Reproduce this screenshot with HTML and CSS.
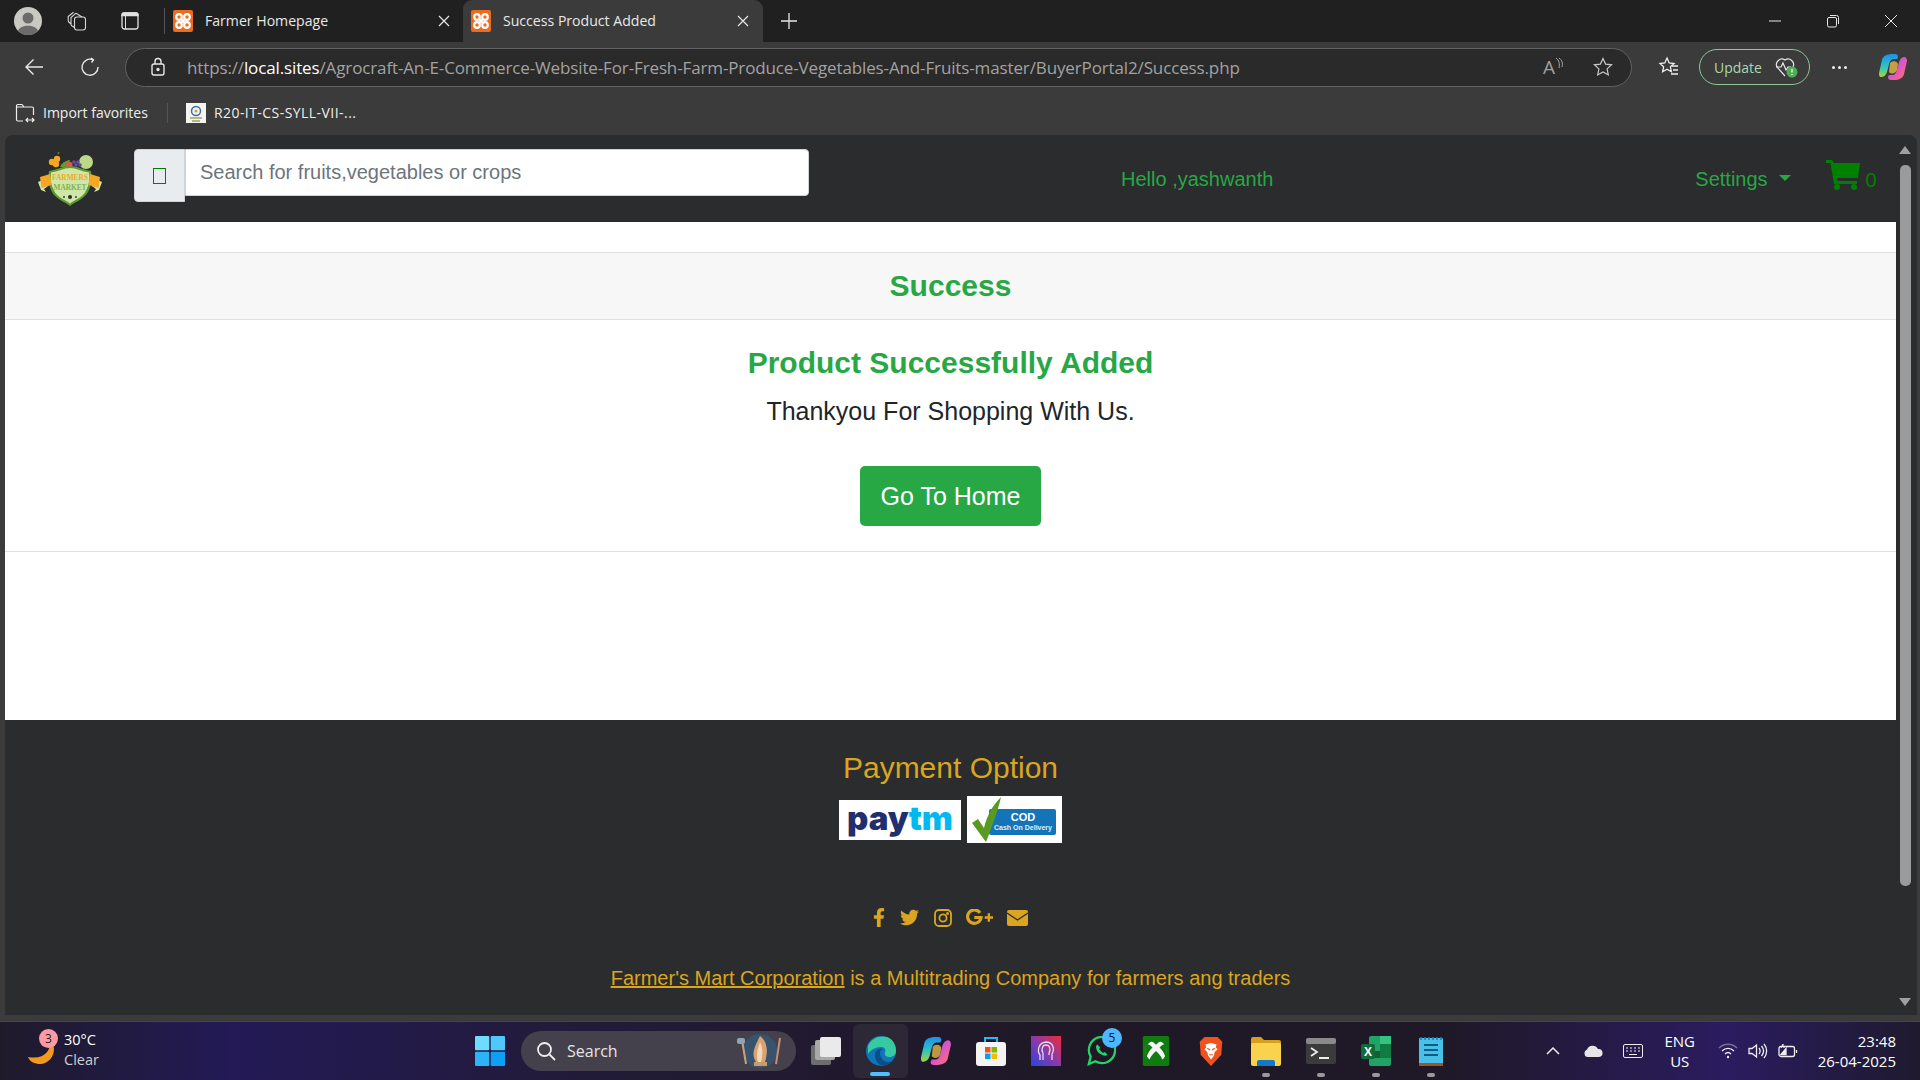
FILE: index.html
```html
<!DOCTYPE html>
<html lang="en">
<head>
<meta charset="utf-8">
<title>Success Product Added</title>
<link rel="stylesheet" href="styles.css">
</head>
<body>
<svg class="defs" width="0" height="0" aria-hidden="true">
  <defs>
    <symbol id="xampp" viewBox="0 0 20 22">
      <rect width="20" height="22" rx="2" fill="#ee6a1f"/>
      <g fill="none" stroke="#fff" stroke-width="2.200"><circle cx="6" cy="7" r="2.800"/><circle cx="14" cy="7" r="2.800"/><circle cx="6" cy="15" r="2.800"/><circle cx="14" cy="15" r="2.800"/><path d="M8 9l4 4M12 9l-4 4"/></g>
    </symbol>
    <symbol id="close" viewBox="0 0 12 12"><path d="M1 1l10 10M11 1L1 11" fill="none" stroke="#e6e6e6" stroke-width="1.200"/></symbol>
    <symbol id="copilot" viewBox="0 0 28 28">
      <defs>
        <linearGradient id="cpa" x1="0" y1="0" x2="0" y2="1"><stop offset="0" stop-color="#1f8fe8"/><stop offset=".55" stop-color="#2fc4c0"/><stop offset="1" stop-color="#a8d23a"/></linearGradient>
        <linearGradient id="cpb" x1="0" y1="0" x2="1" y2="1"><stop offset="0" stop-color="#8a5cf0"/><stop offset=".6" stop-color="#e858b8"/><stop offset="1" stop-color="#f8853c"/></linearGradient>
      </defs>
      <path d="M13 1h3c2 0 3 1 3 3l-1 2h-3c-3 0-4 2-5 5l-2 8c-1 3-3 5-6 5-2 0-2-2-2-4l3-13c1-4 5-6 10-6z" fill="url(#cpa)"/>
      <path d="M15 27h-3c-2 0-3-1-3-3l1-2h3c3 0 4-2 5-5l2-8c1-3 3-5 5-5 2 0 3 2 3 4l-3 13c-1 4-5 6-10 6z" fill="url(#cpb)"/>
      <path d="M11 10c3-3 7-2 8 1l-1 6c-1 3-5 5-8 2z" fill="#f3c34a" opacity=".75"/>
    </symbol>
  </defs>
</svg>

<header class="titlebar">
  <svg class="avatar" viewBox="0 0 28 28"><circle cx="14" cy="14" r="14" fill="#c9c8c3"/><circle cx="14" cy="11" r="5.500" fill="#6b6b6b"/><path d="M4 24c2-7 18-7 20 0a14 14 0 0 1-20 0z" fill="#6b6b6b"/></svg>
  <svg class="tb-collections" viewBox="0 0 20 20" fill="none" stroke="#d8d8d8" stroke-width="1.100"><rect x="7.500" y="6" width="11" height="13" rx="2.500"/><path d="M7.500 16.500l-2.700-1.800a2 2 0 0 1-.8-1.700V6.500L9 2.200M4 13L1.800 11a2 2 0 0 1-.6-1.500V5.500L6.500 1.200M9 2.200l6 3.800"/></svg>
  <svg class="tb-vtabs" viewBox="0 0 20 20" fill="none" stroke="#e0e0e0" stroke-width="1.300"><rect x="2" y="2" width="16" height="16" rx="2.500"/><path d="M5.500 2v16" stroke-width="1"/><path d="M2 4.500h16v-1a1.500 1.500 0 0 0-1.500-1.500h-13A1.500 1.500 0 0 0 2 3.500z" fill="#e0e0e0"/></svg>
  <span class="tb-sep"></span>
  <div class="tab">
    <svg class="favicon"><use href="#xampp"/></svg>
    <span class="tab-label">Farmer Homepage</span>
    <svg class="tab-x"><use href="#close"/></svg>
  </div>
  <div class="tab tab-active">
    <svg class="favicon"><use href="#xampp"/></svg>
    <span class="tab-label">Success Product Added</span>
    <svg class="tab-x"><use href="#close"/></svg>
  </div>
  <svg class="tab-plus" viewBox="0 0 18 18"><path d="M9 1v16M1 9h16" stroke="#e6e6e6" stroke-width="1.300"/></svg>
  <div class="win-controls">
    <span class="win-btn"><svg viewBox="0 0 14 14"><path d="M1 7h12" stroke="#e6e6e6"/></svg></span>
    <span class="win-btn"><svg viewBox="0 0 14 14" fill="none" stroke="#e6e6e6"><rect x="1.500" y="3.500" width="9" height="9.500" rx="1.500"/><path d="M4 1.500h6.500a2 2 0 0 1 2 2V10"/></svg></span>
    <span class="win-btn"><svg viewBox="0 0 14 14"><path d="M1 1l12 12M13 1L1 13" stroke="#e6e6e6"/></svg></span>
  </div>
</header>

<div class="toolbar">
  <svg class="nav-back" viewBox="0 0 20 20" fill="none" stroke="#e8e8e8" stroke-width="1.400"><path d="M19 10H2M9.500 2.500L2 10l7.500 7.500"/></svg>
  <svg class="nav-reload" viewBox="0 0 20 20" fill="none" stroke="#e8e8e8" stroke-width="1.400"><path d="M12.500 2.600A8 8 0 1 0 18 10M11 1l2.500 1.800L11.500 5.500"/></svg>
  <div class="addressbar">
    <svg class="lock" viewBox="0 0 16 20" fill="none" stroke="#e6e6e6" stroke-width="1.400"><rect x="2" y="7" width="12" height="11" rx="2"/><path d="M5 7V4.500a3 3 0 0 1 6 0V7"/><circle cx="8" cy="12.500" r="1" fill="#e6e6e6"/></svg>
    <span class="url"><span class="url-dim">https://</span><span class="url-host">local.sites</span><span class="url-dim">/Agrocraft-An-E-Commerce-Website-For-Fresh-Farm-Produce-Vegetables-And-Fruits-master/BuyerPortal2/Success.php</span></span>
    <span class="read-aloud">A<svg viewBox="0 0 8 14" fill="none" stroke="#a8a8a8"><path d="M1 1c3 2 4 6 3 10M4 1c3 2 4 5 3 9"/></svg></span>
    <svg class="star" viewBox="0 0 20 20" fill="none" stroke="#c8c8c8" stroke-width="1.200"><path d="M10 1.500l2.600 5.600 6 .7-4.500 4.100 1.200 6-5.300-3-5.300 3 1.200-6L1.400 7.800l6-.7z"/></svg>
  </div>
  <svg class="fav-list" viewBox="0 0 22 22" fill="none" stroke="#eee" stroke-width="1.300"><path d="M9 2l2.200 5 4.800.5-3.600 3.300 1 5-4.400-2.600-4.400 2.600 1-5L2 7.500 6.800 7z"/><path d="M14 11h6M15 15h5M13 19h7" transform="translate(0 -1)"/></svg>
  <div class="update-pill">
    <span>Update</span>
    <svg class="update-heart" viewBox="0 0 24 22" fill="none" stroke="#e8e8e8" stroke-width="1.200"><path d="M11 20L3 11a5.500 5.500 0 0 1 8-7 5.500 5.500 0 0 1 8 7"/><path d="M2 11h5l2-4 3 7 2-3h3"/><circle cx="18" cy="16" r="5.500" fill="#4caf50" stroke="none"/><path d="M18 13v3.500M18 18v1" stroke="#fff"/></svg>
  </div>
  <span class="dots"><i></i><i></i><i></i></span>
  <svg class="tool-copilot"><use href="#copilot"/></svg>
</div>

<div class="bookmarks">
  <svg class="bm-import" viewBox="0 0 20 20" fill="none" stroke="#eee" stroke-width="1.200"><path d="M8 18H3a1.500 1.500 0 0 1-1.500-1.500V3A1.500 1.500 0 0 1 3 1.500h4l2 2.500h8a1.500 1.500 0 0 1 1.500 1.500V12M1.500 4H9"/><path d="M11 17h8M13 15l-2 2 2 2M17 15l2 2-2 2"/></svg>
  <span class="bm-text">Import favorites</span>
  <span class="bm-sep"></span>
  <svg class="bm-fav" viewBox="0 0 20 20"><rect width="20" height="20" fill="#f4f4f2"/><circle cx="10" cy="8" r="4.500" fill="none" stroke="#3c6fa8" stroke-width="1.500"/><circle cx="10" cy="8" r="1.500" fill="#c9a23a"/><path d="M4 15h12M6 18h8" stroke="#9aa46a" stroke-width="1.500"/></svg>
  <span class="bm-text bm-text-wide">R20-IT-CS-SYLL-VII-...</span>
</div>

<div class="viewport">
  <div class="page">
    <nav class="navbar">
      <svg class="logo" viewBox="0 0 66 54">
        <circle cx="49" cy="10" r="7" fill="#bcd98a"/>
        <circle cx="20" cy="7" r="3.200" fill="#f5a623"/><circle cx="15" cy="10" r="3.200" fill="#f5a623"/><circle cx="19" cy="12" r="3.200" fill="#f5a623"/>
        <path d="M21 2l1-2" stroke="#5c8a2e" stroke-width="1.500"/>
        <path d="M23 15c2-5 7-7 10-7l-3 7z" fill="#5e9b32"/>
        <circle cx="32" cy="13" r="3.600" fill="#e2574c"/>
        <circle cx="37" cy="10" r="1.800" fill="#6c4aa0"/><circle cx="41" cy="10" r="1.800" fill="#6c4aa0"/><circle cx="39" cy="13" r="1.800" fill="#6c4aa0"/><circle cx="43" cy="13" r="1.800" fill="#6c4aa0"/>
        <path d="M1 30l9-4 1 8-4 3 2 3-5-2z" fill="#cfe6a8"/>
        <path d="M65 30l-9-4-1 8 4 3-2 3 5-2z" fill="#cfe6a8"/>
        <path d="M33 54c-5-4-14-7-18-14-3-6-4-12-3-21 7-1 14-5 21-5s14 4 21 5c1 9 0 15-3 21-4 7-13 10-18 14z" fill="#5e9b32"/>
        <path d="M33 51.500c-5-4-13-6-16-13-3-5-4-11-3-18 7-1 13-4.500 19-4.500s12 3.500 19 4.500c1 7 0 13-3 18-3 7-11 9-16 13z" fill="#cfe6a8"/>
        <path d="M3 25l10-3 1.500 11-10 3z" fill="#f5a623"/>
        <path d="M63 25l-10-3-1.500 11 10 3z" fill="#f5a623"/>
        <text class="logo-t1" x="33" y="28" text-anchor="middle" textLength="36" lengthAdjust="spacingAndGlyphs">FARMERS</text>
        <text class="logo-t2" x="33" y="38" text-anchor="middle" textLength="33" lengthAdjust="spacingAndGlyphs">MARKET</text>
        <circle cx="33" cy="45" r="2" fill="#2b2c2e"/><circle cx="27" cy="45" r=".9" fill="#2b2c2e"/><circle cx="39" cy="45" r=".9" fill="#2b2c2e"/>
      </svg>
      <div class="search-group">
        <span class="search-prepend"><span class="tofu"></span></span>
        <input class="search-input" type="text" placeholder="Search for fruits,vegetables or crops">
      </div>
      <span class="hello">Hello ,yashwanth</span>
      <span class="settings">Settings<span class="caret"></span></span>
      <svg class="cart" viewBox="0 0 36 30"><path d="M0 0h6l2 3h26l-2 15H11l.6 3H31v3H8L4.500 3H0z" fill="#008000"/><circle cx="11" cy="27" r="3" fill="#008000"/><circle cx="28" cy="27" r="3" fill="#008000"/></svg>
      <span class="cart-count">0</span>
    </nav>

    <main class="content">
      <section class="card">
        <h2 class="card-head">Success</h2>
        <div class="card-body">
          <h3 class="card-title">Product Successfully Added</h3>
          <p class="card-text">Thankyou For Shopping With Us.</p>
          <a class="btn-home" href="#">Go To Home</a>
        </div>
      </section>
    </main>

    <footer class="footer">
      <h3 class="pay-title">Payment Option</h3>
      <div class="pay-row">
        <span class="paytm"><span class="pay">pay</span><span class="tm">tm</span></span>
        <svg class="cod" viewBox="0 0 95 47">
          <rect width="95" height="47" fill="#fff"/>
          <rect x="22" y="13" width="67" height="26" rx="2" fill="#1375b8"/>
          <text class="cod-t1" x="56" y="25" text-anchor="middle">COD</text>
          <text class="cod-t2" x="56" y="34" text-anchor="middle">Cash On Delivery</text>
          <path d="M5 27l6-4 6 9C20 20 25 10 34 1c-2 10-9 30-15 45z" fill="#5b9a22"/>
        </svg>
      </div>
      <div class="social">
        <svg class="s-f" viewBox="0 0 320 512"><path d="M279.14 288l14.220-92.660h-88.910v-60.130c0-25.350 12.420-50.060 52.240-50.060h40.420V6.260S260.430 0 225.360 0c-73.220 0-121.080 44.380-121.080 124.720v70.620H22.890V288h81.390v224h100.170V288z"/></svg>
        <svg class="s-t" viewBox="0 0 512 512"><path d="M459.370 151.716c.325 4.548.325 9.097.325 13.645 0 138.720-105.583 298.558-298.558 298.558-59.452 0-114.680-17.219-161.137-47.106 8.447.974 16.568 1.299 25.340 1.299 49.055 0 94.213-16.568 130.274-44.832-46.132-.975-84.792-31.188-98.112-72.772 6.498.974 12.995 1.624 19.818 1.624 9.421 0 18.843-1.300 27.614-3.573-48.081-9.747-84.143-51.980-84.143-102.985v-1.299c13.969 7.797 30.214 12.670 47.431 13.319-28.264-18.843-46.781-51.005-46.781-87.391 0-19.492 5.197-37.360 14.294-52.954 51.655 63.675 129.300 105.258 216.365 109.807-1.624-7.797-2.599-15.918-2.599-24.040 0-57.828 46.782-104.934 104.934-104.934 30.213 0 57.502 12.670 76.670 33.137 23.715-4.548 46.456-13.320 66.599-25.340-7.798 24.366-24.366 44.833-46.132 57.827 21.117-2.273 41.584-8.122 60.426-16.243-14.292 20.791-32.161 39.308-52.628 54.253z"/></svg>
        <svg class="s-i" viewBox="0 0 18 18" fill="none" stroke="#daa520" stroke-width="1.800"><rect x="1" y="1" width="16" height="16" rx="4"/><circle cx="9" cy="9" r="3.600"/><circle cx="13.500" cy="4.500" r=".6" fill="#daa520"/></svg>
        <svg class="s-g" viewBox="0 0 26 16" fill="none" stroke="#daa520" stroke-width="3"><path d="M13.500 3.600A6.500 6.500 0 1 0 14.500 8H8"/><path d="M18 8h8M22 4v8" stroke-width="2.200"/></svg>
        <svg class="s-m" viewBox="0 0 21 16"><rect width="21" height="16" rx="2" fill="#daa520"/><path d="M0 3l10.500 7L21 3" fill="none" stroke="#2b2c2e" stroke-width="1.300"/></svg>
      </div>
      <p class="corp"><a class="corp-link" href="#">Farmer's Mart Corporation</a> is a Multitrading Company for farmers ang traders</p>
    </footer>
  </div>
  <aside class="scrollbar">
    <span class="sb-up"></span>
    <span class="sb-thumb"></span>
    <span class="sb-down"></span>
  </aside>
</div>

<div class="taskbar">
  <div class="weather">
    <svg class="moon" viewBox="0 0 28 24"><path d="M24 1c1 10-6 19-22 16 2 5 7 7 12 7 8 0 14-7 14-15 0-3-1-6-4-8z" fill="#f39a1e"/></svg>
    <span class="weather-badge">3</span>
    <span class="weather-text"><span class="w1">30°C</span><span class="w2">Clear</span></span>
  </div>
  <svg class="start" viewBox="0 0 30 30"><rect width="14.300" height="14.300" rx="1" fill="#6fdcff"/><rect x="15.700" width="14.300" height="14.300" rx="1" fill="#4fc8fb"/><rect y="15.700" width="14.300" height="14.300" rx="1" fill="#2cb3f8"/><rect x="15.700" y="15.700" width="14.300" height="14.300" rx="1" fill="#109df5"/></svg>
  <div class="tsearch">
    <svg class="tsearch-ico" viewBox="0 0 20 20" fill="none" stroke="#eee" stroke-width="1.800"><circle cx="8.500" cy="8.500" r="6.500"/><path d="M13.500 13.500L19 19"/></svg>
    <span class="tsearch-text">Search</span>
    <svg class="tsearch-art" viewBox="0 0 54 34"><circle cx="26" cy="17" r="17" fill="#2f5f85" opacity=".6"/><path d="M8 6l4 24" stroke="#c9a27a" stroke-width="2"/><rect x="3" y="4" width="8" height="6" rx="2" fill="#8ea4b5"/><path d="M26 2c8 6 8 16 5 26h-9c-5-8-2-14 4-26z" fill="#d8a273"/><path d="M26 8c3 6 3 12 1 20h-3c-2-6-1-12 2-20z" fill="#f2d7b8"/><rect x="20" y="28" width="13" height="4" fill="#c99a6a"/><path d="M46 4l-4 26" stroke="#c98c72" stroke-width="2"/></svg>
  </div>
  <div class="apps">
    <span class="app"><svg viewBox="0 0 30 28"><rect x="0" y="8" width="20" height="20" rx="2" fill="#6e6e6e"/><rect x="4" y="3" width="20" height="20" rx="2" fill="#a9a9a9"/><rect x="9" y="0" width="21" height="20" rx="2" fill="#eaeaea"/></svg></span>
    <span class="app app-active"><svg viewBox="0 0 30 30"><circle cx="15" cy="15" r="15" fill="#1173b8"/><path d="M2 10C5 2 14-1 21 1c6 2 9 8 9 14 0 4-3 6-7 6-3 0-5-2-4-5 1-2 0-5-4-5-6 0-10 3-13 7z" fill="#37c9a0"/><path d="M9 19c0-5 4-7 8-6-3 1-4 4-2 8 2 5 7 6 11 4-3 4-8 5-12 4-3-2-5-6-5-10z" fill="#0b4f8a"/></svg><i class="app-bar"></i></span>
    <span class="app"><svg class="app-copilot"><use href="#copilot"/></svg></span>
    <span class="app"><svg viewBox="0 0 30 30"><path d="M9 6V2h12v4" fill="none" stroke="#29b6f6" stroke-width="2"/><rect y="6" width="30" height="24" rx="3" fill="#f4f4f4"/><rect x="9" y="11" width="5.500" height="5.500" fill="#f25022"/><rect x="15.500" y="11" width="5.500" height="5.500" fill="#7fba00"/><rect x="9" y="17.500" width="5.500" height="5.500" fill="#00a4ef"/><rect x="15.500" y="17.500" width="5.500" height="5.500" fill="#ffb900"/></svg></span>
    <span class="app"><svg viewBox="0 0 30 30"><defs><linearGradient id="pg" x1="0" y1="1" x2="1" y2="0"><stop offset="0" stop-color="#2645e0"/><stop offset=".5" stop-color="#8a3aa8"/><stop offset="1" stop-color="#ee2a3a"/></linearGradient></defs><rect width="30" height="30" fill="url(#pg)"/><path d="M9 24v-5c-3-4-2-12 6-13 7 0 9 7 6 12v6M12 24v-7c-2-3-1-8 3-8s5 5 3 8v2" fill="none" stroke="#e8d8f0" stroke-width="1.300"/></svg></span>
    <span class="app"><svg viewBox="0 0 30 32"><path d="M2 30l2-8a14 14 0 1 1 5 5z" fill="none" stroke="#25d366" stroke-width="2.400"/><path d="M10 10c-1 3 1 7 4 9s6 3 8 1l-3-3-2 1-4-4 1-2-3-3z" fill="#25d366"/></svg><b class="wa-badge">5</b></span>
    <span class="app"><svg viewBox="0 0 30 34"><rect width="30" height="34" rx="2" fill="#107c10"/><circle cx="15" cy="17" r="12" fill="#f4f4f4"/><path d="M8 6c3 0 5 2 7 4 2-2 4-4 7-4-2-2-5-2.500-7-2.500S10 4 8 6zM15 17c-3 3-7 7-7 10 2 2 4.500 3 7 3s5-1 7-3c0-3-4-7-7-10zM11 13C8 10 6 9 5 9.500c-3 4-3 10-.5 14 1-4 3.500-7.500 6.500-10.500zM19 13c3-3 5-4 6-3.500 3 4 3 10 .5 14-1-4-3.500-7.500-6.500-10.500z" fill="#107c10"/></svg></span>
    <span class="app"><svg viewBox="0 0 26 32"><path d="M6 1h14l5 5-1 14-11 12L2 20 1 6z" fill="#f1501f"/><path d="M7 9l6-1.500L19 9l-1 3 2 2-3 3-1 4-3 4-3-4-1-4-3-3 2-2z" fill="#fff"/><path d="M9 13l3 2M17 13l-3 2M11 20h4" stroke="#f1501f" stroke-width="1.200"/></svg></span>
    <span class="app"><svg viewBox="0 0 30 30"><path d="M0 3a2 2 0 0 1 2-2h8l3 3h15a2 2 0 0 1 2 2v4H0z" fill="#d89f1d"/><rect y="7" width="30" height="23" rx="2" fill="#f9d34e"/><path d="M6 30v-4a2 2 0 0 1 2-2h14a2 2 0 0 1 2 2v4z" fill="#1478c8"/></svg><i class="app-dot"></i></span>
    <span class="app"><svg viewBox="0 0 30 26"><rect width="30" height="26" rx="2" fill="#3b3b3b"/><rect width="30" height="6" rx="2" fill="#8a8a8a"/><path d="M5 10l6 4-6 4" fill="none" stroke="#eee" stroke-width="1.800"/><path d="M13 20h10" stroke="#eee" stroke-width="2"/></svg><i class="app-dot"></i></span>
    <span class="app"><svg viewBox="0 0 30 30"><rect x="8" width="22" height="30" rx="2" fill="#21a366"/><rect x="19" y="8" width="11" height="14" fill="#107c41"/><rect x="8" y="15" width="11" height="7" fill="#185c37"/><rect x="19" width="11" height="8" fill="#33c481"/><rect y="8" width="14" height="15" rx="2" fill="#0f6b3c"/><text class="xl" x="7" y="20" text-anchor="middle">X</text></svg><i class="app-dot"></i></span>
    <span class="app"><svg viewBox="0 0 24 30"><rect y="2" width="24" height="27" rx="1" fill="#47c1ea"/><rect y="27" width="24" height="3" fill="#a8541c"/><path d="M2 1v3M6 1v3M10 1v3M14 1v3M18 1v3M22 1v3" stroke="#1b7fa8" stroke-width="1.500"/><path d="M5 9h14M5 14h14M5 19h14" stroke="#105b7e" stroke-width="2"/></svg><i class="app-dot"></i></span>
  </div>
  <div class="tray">
    <svg class="t-chev" viewBox="0 0 14 8" fill="none" stroke="#eee" stroke-width="1.500"><path d="M1 7l6-6 6 6"/></svg>
    <svg class="t-cloud" viewBox="0 0 20 12"><path d="M4 12a4 4 0 0 1 0-7.500A6 6 0 0 1 15 4a4 4 0 0 1 1 8z" fill="#e6e6e6"/></svg>
    <svg class="t-kbd" viewBox="0 0 20 14" fill="none" stroke="#eee"><rect x=".5" y=".5" width="19" height="13" rx="1.500"/><path d="M3 4h2M7 4h2M11 4h2M15 4h2M3 7h2M7 7h2M11 7h2M15 7h2M6 10.500h8"/></svg>
    <span class="t-lang"><span>ENG</span><span>US</span></span>
    <svg class="t-wifi" viewBox="0 0 20 16" fill="none" stroke="#eee" stroke-width="1.400"><path d="M1 5c5-5 13-5 18 0" opacity=".4"/><path d="M4 8c3.500-3.500 8.500-3.500 12 0M7 11c2-2 4-2 6 0"/><circle cx="10" cy="14" r="1.200" fill="#eee" stroke="none"/></svg>
    <svg class="t-vol" viewBox="0 0 20 16" fill="none" stroke="#eee" stroke-width="1.300"><path d="M1 5.500h3L8.500 2v12L4 10.500H1z"/><path d="M11 5c1.500 2 1.500 4 0 6M13.500 3c2.500 3 2.500 7 0 10M16 1c3.500 4 3.500 10 0 14"/></svg>
    <svg class="t-bat" viewBox="0 0 20 16" fill="none" stroke="#eee" stroke-width="1.300"><rect x="1" y="3.500" width="15.500" height="10" rx="2"/><path d="M18.500 7v3"/><path d="M3 11.500l5-6v6z" fill="#eee"/><path d="M3 5l2-4v3h2" stroke-width="1"/></svg>
    <span class="t-clock"><span>23:48</span><span>26-04-2025</span></span>
  </div>
</div>
</body>
</html>
```
FILE: styles.css
```css
* { box-sizing: border-box; }
html, body { margin: 0; height: 100%; }
body {
  width: 1920px; height: 1080px; overflow: hidden;
  background: #3b3b3b;
  font-family: "Liberation Sans", Arial, sans-serif;
  display: flex; flex-direction: column;
}
.defs { position: absolute; }
svg { display: block; flex: none; }

/* Browser chrome */
.titlebar { height: 42px; background: #202020; display: flex; align-items: center; padding-left: 14px; font-family: "Open Sans", sans-serif; color: #e8e8e8; }
.avatar { width: 28px; height: 28px; }
.tb-collections { width: 20px; height: 20px; margin-left: 25px; }
.tb-vtabs { width: 20px; height: 20px; margin-left: 33px; }
.tb-sep { width: 1px; height: 26px; background: #555; margin-left: 24px; }
.tab { width: 298px; height: 42px; display: flex; align-items: center; padding: 0 13px 0 8px; font-size: 14.100px; border-radius: 9px 9px 0 0; }
.tab-active { width: 300px; padding-right: 14px; background: #3b3b3b; }
.favicon { width: 20px; height: 22px; }
.tab-label { flex: 1; margin-left: 12px; white-space: nowrap; margin-top: -1px; }
.tab-x { width: 12px; height: 12px; }
.tab-plus { width: 18px; height: 18px; margin-left: 17px; }
.win-controls { margin-left: auto; display: flex; }
.win-btn { width: 58px; height: 42px; display: flex; align-items: center; justify-content: center; }
.win-btn svg { width: 14px; height: 14px; }

.toolbar { height: 50px; display: flex; align-items: center; padding-left: 24px; }
.nav-back { width: 20px; height: 20px; }
.nav-reload { width: 20px; height: 20px; margin-left: 36px; }
.addressbar { width: 1507px; height: 39px; margin-left: 25px; border: 1px solid #626262; border-radius: 20px; background: #2a2a2a; display: flex; align-items: center; padding-left: 24px; }
.lock { width: 16px; height: 20px; }
.url { margin-left: 21px; font-family: "Open Sans", sans-serif; font-size: 17px; white-space: nowrap; letter-spacing: -.13px; width: 1326px; }
.url-dim { color: #a2a2a2; }
.url-host { color: #fff; }
.read-aloud { display: flex; font-family: "Open Sans", sans-serif; font-size: 19px; line-height: 20px; color: #a0a0a0; width: 24px; margin-left: 30px; }
.read-aloud svg { width: 8px; height: 14px; }
.star { width: 20px; height: 20px; margin-left: 26px; }
.fav-list { width: 22px; height: 22px; margin-left: 26px; }
.update-pill { width: 111px; height: 36px; margin-left: 19px; border: 1.500px solid #8fc79a; border-radius: 18px; display: flex; align-items: center; padding-left: 14px; color: #a9d8b0; font-family: "Open Sans", sans-serif; font-size: 14px; }
.update-heart { width: 24px; height: 22px; margin-left: 12px; }
.dots { display: flex; gap: 3px; margin-left: 22px; }
.dots i { width: 3px; height: 3px; border-radius: 50%; background: #eee; }
.tool-copilot { width: 28px; height: 28px; margin-left: 32px; }

.bookmarks { height: 43px; display: flex; align-items: center; padding: 0 0 2px 15px; font-family: "Open Sans", sans-serif; font-size: 14px; color: #eee; }
.bm-import { width: 20px; height: 20px; }
.bm-text { margin-left: 8px; white-space: nowrap; }
.bm-text-wide { letter-spacing: .45px; }
.bm-sep { width: 1px; height: 20px; background: #555; margin: 0 18px 0 19px; }
.bm-fav { width: 20px; height: 20px; }

/* Page */
.viewport { height: 880px; margin-left: 5px; margin-right: 3px; display: flex; background: #2b2c2e; border-radius: 8px 8px 0 0; overflow: hidden; }
.page { width: 1891px; display: flex; flex-direction: column; }
.navbar { height: 87px; display: flex; align-items: flex-start; color: #28a745; }
.logo { width: 66px; height: 54px; margin: 17px 0 0 32px; }
.logo-t1 { font: 700 8.500px "Liberation Serif", serif; fill: #f5a623; }
.logo-t2 { font: 700 8.500px "Liberation Serif", serif; fill: #7fb24a; }
.search-group { display: flex; align-items: flex-start; margin: 14px 0 0 31px; }
.search-prepend { width: 51px; height: 53px; background: #e9ecef; border: 1px solid #ced4da; border-radius: 4px 0 0 4px; display: flex; align-items: center; justify-content: center; }
.tofu { width: 13px; height: 16px; border: 1px solid #008000; }
.search-input { width: 624px; height: 47px; border: 1px solid #ced4da; border-radius: 0 4px 4px 0; background: #fff; padding: 0 14px; font: 20px "Liberation Sans", Arial, sans-serif; color: #495057; margin: 0; outline: none; }
.search-input::placeholder { color: #6c757d; opacity: 1; }
.hello { margin: 32px 0 0 312px; font-size: 20px; line-height: 24px; white-space: nowrap; }
.settings { margin: 32px 0 0 422px; font-size: 20px; line-height: 24px; display: flex; align-items: center; white-space: nowrap; }
.caret { width: 0; height: 0; margin-left: 11px; border-top: 6px solid #28a745; border-left: 6px solid transparent; border-right: 6px solid transparent; margin-top: -3px; }
.cart { width: 36px; height: 30px; margin: 25px 0 0 35px; }
.cart-count { margin: 33px 0 0 4px; color: #008000; font-size: 20px; line-height: 24px; }

.content { height: 498px; background: #fff; padding-top: 30px; }
.card { border-top: 1px solid #dfdfdf; border-bottom: 1px solid #dfdfdf; height: 300px; text-align: center; }
.card-head { margin: 0; height: 67px; background: #f7f7f7; border-bottom: 1px solid #dfdfdf; color: #28a745; font-size: 30px; line-height: 65px; font-weight: 700; }
.card-body { padding-top: 25px; }
.card-title { margin: 0; color: #28a745; font-size: 30px; line-height: 36px; font-weight: 700; }
.card-text { margin: 12px 0 0; color: #212529; font-size: 25px; line-height: 36px; }
.btn-home { display: inline-block; margin-top: 37px; width: 181px; height: 60px; background: #28a745; color: #fff; border-radius: 5px; font-size: 25px; line-height: 60px; text-decoration: none; }

.footer { flex: 1; background: #2b2c2e; display: flex; flex-direction: column; align-items: center; color: #daa520; }
.pay-title { margin: 30px 0 0; font-size: 30px; line-height: 36px; font-weight: 400; }
.pay-row { display: flex; align-items: center; gap: 6px; margin-top: 10px; }
.paytm { width: 122px; height: 40px; background: #fff; display: flex; align-items: center; justify-content: center; font: 900 33px/40px Inter, sans-serif; padding-bottom: 4px; }
.pay { color: #20306f; }
.tm { color: #00b9f1; }
.cod { width: 95px; height: 47px; }
.cod-t1 { font: 700 11px "Liberation Sans", sans-serif; fill: #fff; }
.cod-t2 { font: 700 7px "Liberation Sans", sans-serif; fill: #e0eef8; }
.social { display: flex; align-items: center; margin-top: 65px; height: 19px; fill: #daa520; }
.s-f { width: 12px; height: 19px; }
.s-t { width: 19px; height: 19px; margin-left: 15px; }
.s-i { width: 18px; height: 18px; margin-left: 15px; }
.s-g { width: 27px; height: 17px; margin-left: 14px; }
.s-m { width: 21px; height: 16px; margin-left: 14px; }
.corp { margin: 39px 0 0; font-size: 20px; line-height: 24px; }
.corp-link { color: #daa520; text-decoration: underline; }

.scrollbar { flex: 1; display: flex; flex-direction: column; align-items: center; padding: 11px 3px 0 0; }
.sb-up { width: 0; height: 0; border-left: 6px solid transparent; border-right: 6px solid transparent; border-bottom: 8px solid #a0a0a0; }
.sb-thumb { width: 11px; height: 721px; margin-top: 11px; background: #9b9b9b; border-radius: 5px; }
.sb-down { width: 0; height: 0; margin-top: 112px; border-left: 6px solid transparent; border-right: 6px solid transparent; border-top: 8px solid #a0a0a0; }

/* Taskbar */
.taskbar { height: 59px; margin-top: 6px; display: flex; align-items: center; color: #fff; font-family: "Open Sans", sans-serif; background: linear-gradient(90deg, #1f1a2b 0%, #231a56 12%, #221b38 30%, #1f1826 55%, #1f1826 75%, #2a1c60 90%, #1f1a2e 100%); border-top: 1px solid #46424f; }
.weather { width: 475px; height: 58px; position: relative; padding: 0 0 2px 64px; display: flex; align-items: center; }
.moon { position: absolute; left: 26px; top: 18px; width: 28px; height: 24px; }
.weather-badge { position: absolute; left: 39px; top: 7px; width: 19px; height: 19px; border-radius: 50%; background: #ff9aa5; color: #222; font-size: 12px; line-height: 19px; text-align: center; }
.weather-text { display: flex; flex-direction: column; font-size: 14.500px; line-height: 20px; }
.w2 { color: #d0d0d0; }
.start { width: 30px; height: 30px; }
.tsearch { width: 275px; height: 40px; margin-left: 16px; background: #45414c; border-radius: 20px; display: flex; align-items: center; padding: 0 8px 0 15px; }
.tsearch-ico { width: 20px; height: 20px; }
.tsearch-text { margin-left: 11px; font-size: 16px; color: #e4e4e4; flex: 1; }
.tsearch-art { width: 54px; height: 34px; }
.apps { display: flex; margin-left: 2px; }
.app { width: 55px; height: 54px; display: flex; align-items: center; justify-content: center; position: relative; border-radius: 6px; }
.app svg { width: 30px; height: 30px; }
.app .app-copilot { width: 30px; height: 30px; }
.app-active { background: #2d2836; }
.app-bar { position: absolute; left: 17px; bottom: 2px; width: 20px; height: 4px; border-radius: 2px; background: #4dc2ff; }
.app-dot { position: absolute; left: 24px; bottom: 1px; width: 8px; height: 4px; border-radius: 2px; background: #9a9a9a; }
.wa-badge { position: absolute; left: 29px; top: 4px; width: 20px; height: 20px; border-radius: 50%; background: #4db8ff; color: #111; font-size: 12px; font-weight: 400; line-height: 20px; text-align: center; }
.xl { font: 700 12px "Liberation Sans", sans-serif; fill: #fff; }
.tray { margin-left: auto; padding-right: 24px; display: flex; align-items: center; font-size: 15px; }
.t-chev { width: 14px; height: 8px; }
.t-cloud { width: 20px; height: 12px; margin-left: 23px; }
.t-kbd { width: 20px; height: 14px; margin-left: 20px; }
.t-lang { display: flex; flex-direction: column; align-items: center; line-height: 20px; width: 40px; margin-left: 17px; }
.t-wifi { width: 20px; height: 16px; margin-left: 18px; }
.t-vol { width: 20px; height: 16px; margin-left: 10px; }
.t-bat { width: 20px; height: 16px; margin-left: 10px; }
.t-clock { display: flex; flex-direction: column; align-items: flex-end; line-height: 20px; margin-left: 20px; }
```
